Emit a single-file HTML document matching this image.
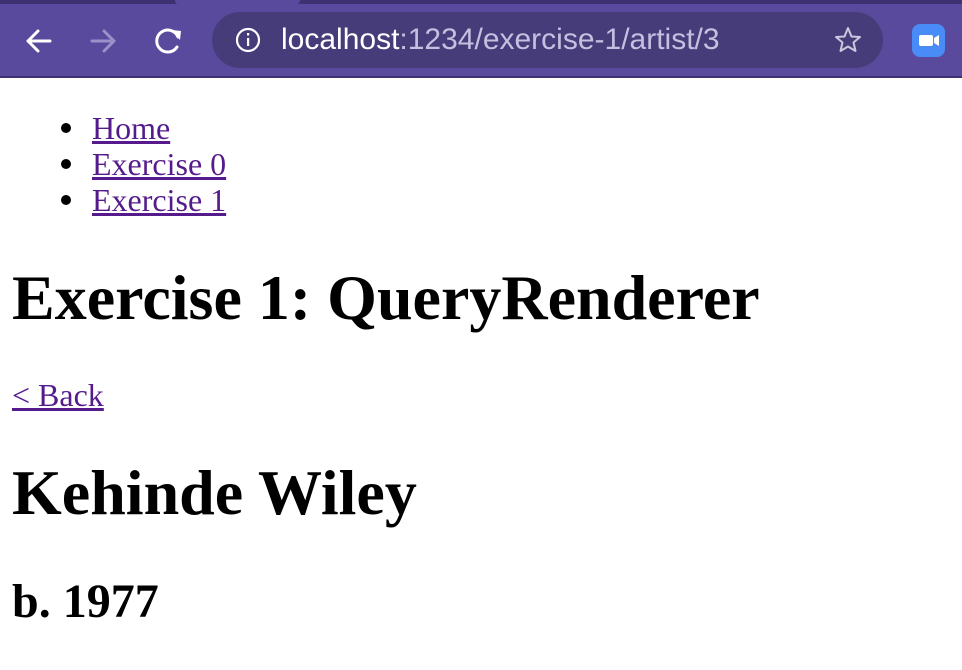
<!DOCTYPE html>
<html><head><style>
html,body{margin:0;padding:0;width:962px;height:670px;overflow:hidden;background:#fff;position:relative;font-family:"Liberation Serif",serif;}
.t{position:absolute;left:12px;line-height:1;white-space:nowrap;color:#000}
a{color:#551a8b;text-decoration:underline}
.li{position:absolute;left:92px;font-size:32px;line-height:1}
.dot{position:absolute;left:61px;width:10px;height:10px;border-radius:50%;background:#000}
</style></head><body>
<div style="position:absolute;left:0;top:0;width:962px;height:76px;background:#5a4a9e"></div>
<div style="position:absolute;left:0;top:0;width:962px;height:4px;background:#3c3272"></div>
<div style="position:absolute;left:175px;top:0;width:125px;height:5px;background:#5a4a9e;border-radius:0 0 8px 8px"></div>
<div style="position:absolute;left:0;top:76px;width:962px;height:2px;background:#3c3272"></div>
<svg style="position:absolute;left:0;top:0" width="962" height="76">
<path d="M50 41H28M38 31L28 41L38 51" stroke="#fff" stroke-width="3" fill="none" stroke-linecap="round" stroke-linejoin="round"/>
<path d="M92 41H114M104 31L114 41L104 51" stroke="#9b90c8" stroke-width="3" fill="none" stroke-linecap="round" stroke-linejoin="round"/>
<path d="M178 37A11 11 0 1 0 177 47" stroke="#fff" stroke-width="3" fill="none" stroke-linecap="round"/>
<path d="M172 30L181 31L180 40Z" fill="#fff"/>
<rect x="212" y="12" width="671" height="56" rx="28" fill="#463c7a"/>
<circle cx="248" cy="40" r="11" stroke="#fff" stroke-width="2.2" fill="none"/>
<rect x="247" y="38" width="2.2" height="8" fill="#fff"/><rect x="247" y="33" width="2.2" height="2.5" fill="#fff"/>
<path d="M848 28L851.5 36.5L860 37L853.5 42.5L855.5 51L848 46.5L840.5 51L842.5 42.5L836 37L844.5 36.5Z" stroke="#ccc7dc" stroke-width="2" fill="none" stroke-linejoin="round"/>
<rect x="912" y="24" width="33" height="33" rx="8" fill="#4a8cf7"/>
<rect x="919" y="35" width="14" height="11" rx="2" fill="#fff"/><path d="M934 38L939 35V46L934 43Z" fill="#fff"/>
</svg>
<div style="position:absolute;left:281px;top:25px;font-family:'Liberation Sans',sans-serif;font-size:30px;line-height:1;color:#fff;white-space:nowrap">localhost<span style="color:#c5bfe0">:1234/exercise-1/artist/3</span></div>
<div class="dot" style="top:123px"></div><div class="li" style="top:112px"><a>Home</a></div>
<div class="dot" style="top:159px"></div><div class="li" style="top:148px"><a>Exercise 0</a></div>
<div class="dot" style="top:195px"></div><div class="li" style="top:184px"><a>Exercise 1</a></div>
<div class="t" style="top:266px;font-size:64px;font-weight:bold">Exercise 1: QueryRenderer</div>
<div class="t" style="top:379px;font-size:32px"><a>&lt; Back</a></div>
<div class="t" style="top:461px;font-size:64px;font-weight:bold">Kehinde Wiley</div>
<div class="t" style="top:578px;font-size:48px;font-weight:bold">b. 1977</div>
</body></html>
